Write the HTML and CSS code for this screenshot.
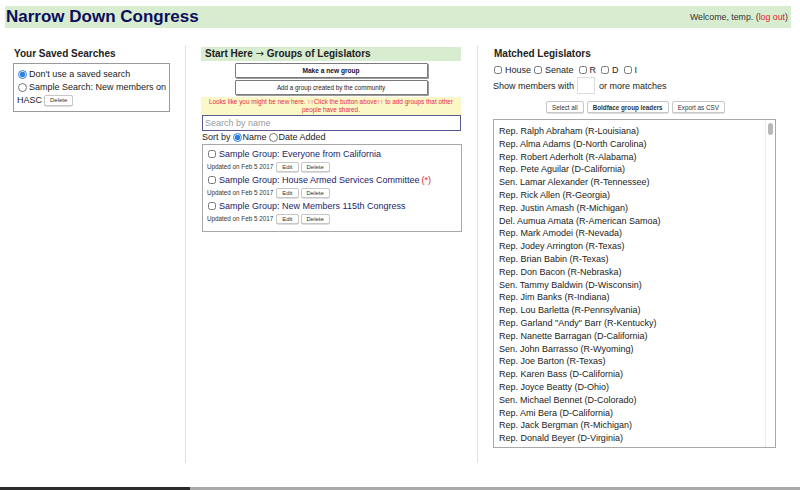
FILE: index.html
```html
<!DOCTYPE html>
<html>
<head>
<meta charset="utf-8">
<link rel="stylesheet" href="styles.css">
</head>
<body>
<div class="page">
  <header class="topbar">
    <h1 class="title">Narrow Down Congress</h1>
    <div class="welcome">Welcome, temp. (<a class="logout" href="#">log out</a>)</div>
  </header>
  <main class="cols">
    <section class="col col1">
      <h2 class="heading">Your Saved Searches</h2>
      <div class="saved">
        <label class="line"><input type="radio" name="s" class="radio" checked> Don't use a saved search</label>
        <label class="line"><input type="radio" name="s" class="radio"> Sample Search: New members on</label>
        <div class="line">HASC <button class="sbtn">Delete</button></div>
      </div>
    </section>
    <section class="col col2">
      <h2 class="heading green">Start Here <span class="arrow">→</span> Groups of Legislators</h2>
      <button class="bigbtn bold">Make a new group</button>
      <button class="bigbtn">Add a group created by the community</button>
      <div class="notice">Looks like you might be new here. ↑↑Click the button above↑↑ to add groups that other people have shared.</div>
      <input class="search" type="text" placeholder="Search by name">
      <div class="sort">Sort by <input type="radio" name="o" class="radio" checked>Name<input type="radio" name="o" class="radio">Date Added</div>
      <div class="groups">
        <div class="group">
          <label class="gname"><input type="checkbox" class="check"> Sample Group: Everyone from California</label>
          <div class="meta">Updated on Feb 5 2017 <button class="sbtn">Edit</button> <button class="sbtn">Delete</button></div>
        </div>
        <div class="group">
          <label class="gname"><input type="checkbox" class="check"> Sample Group: House Armed Services Committee <span class="star">(*)</span></label>
          <div class="meta">Updated on Feb 5 2017 <button class="sbtn">Edit</button> <button class="sbtn">Delete</button></div>
        </div>
        <div class="group">
          <label class="gname"><input type="checkbox" class="check"> Sample Group: New Members 115th Congress</label>
          <div class="meta">Updated on Feb 5 2017 <button class="sbtn">Edit</button> <button class="sbtn">Delete</button></div>
        </div>
      </div>
    </section>
    <section class="col col3">
      <h2 class="heading">Matched Legislators</h2>
      <div class="filters">
        <label><input type="checkbox" class="check">House</label>
        <label><input type="checkbox" class="check">Senate</label>
        <label class="gap"><input type="checkbox" class="check">R</label>
        <label class="gap"><input type="checkbox" class="check">D</label>
        <label class="gap"><input type="checkbox" class="check">I</label>
      </div>
      <div class="showrow">Show members with <input class="num" type="text"> or more matches</div>
      <div class="actions">
        <button class="sbtn">Select all</button>
        <button class="sbtn bold">Boldface group leaders</button>
        <button class="sbtn">Export as CSV</button>
      </div>
      <div class="listbox">
        <ul class="list">
          <li>Rep. Ralph Abraham (R-Louisiana)</li>
          <li>Rep. Alma Adams (D-North Carolina)</li>
          <li>Rep. Robert Aderholt (R-Alabama)</li>
          <li>Rep. Pete Aguilar (D-California)</li>
          <li>Sen. Lamar Alexander (R-Tennessee)</li>
          <li>Rep. Rick Allen (R-Georgia)</li>
          <li>Rep. Justin Amash (R-Michigan)</li>
          <li>Del. Aumua Amata (R-American Samoa)</li>
          <li>Rep. Mark Amodei (R-Nevada)</li>
          <li>Rep. Jodey Arrington (R-Texas)</li>
          <li>Rep. Brian Babin (R-Texas)</li>
          <li>Rep. Don Bacon (R-Nebraska)</li>
          <li>Sen. Tammy Baldwin (D-Wisconsin)</li>
          <li>Rep. Jim Banks (R-Indiana)</li>
          <li>Rep. Lou Barletta (R-Pennsylvania)</li>
          <li>Rep. Garland "Andy" Barr (R-Kentucky)</li>
          <li>Rep. Nanette Barragan (D-California)</li>
          <li>Sen. John Barrasso (R-Wyoming)</li>
          <li>Rep. Joe Barton (R-Texas)</li>
          <li>Rep. Karen Bass (D-California)</li>
          <li>Rep. Joyce Beatty (D-Ohio)</li>
          <li>Sen. Michael Bennet (D-Colorado)</li>
          <li>Rep. Ami Bera (D-California)</li>
          <li>Rep. Jack Bergman (R-Michigan)</li>
          <li>Rep. Donald Beyer (D-Virginia)</li>
        </ul>
        <div class="scrolltrack"><div class="thumb"></div></div>
      </div>
    </section>
  </main>
  <div class="spacer"></div>
  <div class="statusbar"><div class="dark"></div><div class="light"></div></div>
</div>
</body>
</html>
```
FILE: styles.css
```css
* { box-sizing: border-box; }
html, body { margin: 0; padding: 0; background: #fff; }
body { font-family: "Liberation Sans", Arial, sans-serif; color: #222; font-size: 9px; }
.page { height: 490px; display: flex; flex-direction: column; overflow: hidden; }

.topbar {
  margin: 6px 9px 0 5px; height: 22px; background: #d8ecd0;
  display: flex; align-items: center; justify-content: space-between; padding: 0 3px 0 1px;
}
.title { margin: 0; font-size: 17px; font-weight: bold; color: #0c0c5c; line-height: 22px; }
.welcome { font-size: 8.8px; color: #333; }
.logout { color: #e0202a; text-decoration: none; }

.cols { display: flex; margin: 17px 0 0 5px; height: 418px; }
.col { height: 100%; }
.col1 { width: 181px; padding-left: 8px; border-right: 1px solid #e2e2e2; }
.col2 { width: 292px; padding-left: 15px; padding-right: 16px; border-right: 1px solid #e2e2e2; }
.col3 { padding-left: 15px; width: 313px; }

.heading { margin: 2px 0 2px; font-size: 10px; font-weight: bold; line-height: 14px; height: 14px; color: #222; }
.col1 .heading, .col3 .heading { padding-left: 1px; }
.heading.green { background: #d8ecd0; padding-left: 4px; }
.arrow { font-family: "DejaVu Sans", sans-serif; font-weight: normal; font-size: 10px; }

.saved { width: 157px; border: 1px solid #9a9a9a; padding: 4px 3px 4px 3px; font-size: 9px; line-height: 13px; }
.line { display: flex; align-items: center; white-space: nowrap; }
.radio { margin: 0 2px 0 1px; width: 9px; height: 9px; accent-color: #2d7ee0; }
.check { margin: 0 3px 0 1px; width: 8px; height: 8px; }

button { font-family: "Liberation Sans", Arial, sans-serif; cursor: default; }
.sbtn {
  font-size: 6px; padding: 0 5px; height: 11px; line-height: 9px;
  background: #fff; border: 1px solid #c8c8c8; border-radius: 2px; color: #333;
  margin-left: 2px; box-shadow: 0 0.5px 0 #bbb;
}
.bold { font-weight: bold; }

.bigbtn {
  display: block; width: 193px; height: 15px; margin: 0 auto 2px; padding: 0;
  background: #fff; border: 1px solid #7a7a7a; border-radius: 1px;
  box-shadow: 1px 1px 0 #9a9a9a; font-size: 6.3px; color: #222;
}
.bigbtn.bold { font-size: 6.6px; color: #111133; }

.notice {
  background: #fbf8c8; color: #e8294a; font-size: 6.4px; line-height: 8px;
  text-align: center; padding: 1px 6px; height: 18px; margin-top: 1px;
}
.search {
  display: block; width: 259px; height: 16px; margin: 0 0 0 1px;
  border: 1.5px solid #5a5a92; padding: 0 2px; font-size: 9px;
  font-family: "Liberation Sans", Arial, sans-serif;
}
.search::placeholder { color: #9a9a9a; }
.sort { display: flex; align-items: center; height: 12px; margin: 0 0 1px 1px; font-size: 9px; }
.sort .radio { margin: 0 1px 0 2px; }

.groups { width: 260px; margin-left: 1px; border: 1px solid #a8a8a8; padding: 2px 4px 6px 4px; height: 88px; }
.group { height: 26px; }
.gname { display: flex; align-items: center; height: 13px; color: #1c1c6a; font-size: 9px; white-space: nowrap; }
.star { color: #e02030; margin-left: 2px; }
.meta { display: flex; align-items: center; height: 13px; font-size: 6.3px; color: #333; }
.meta .sbtn { height: 10px; padding: 0 5px; margin-left: 2px; }
.meta .sbtn:first-child { margin-left: 3px; }

.filters { display: flex; align-items: center; height: 14px; font-size: 9px; }
.filters label { display: flex; align-items: center; margin-right: 2px; }
.filters .gap { margin-left: 2px; }
.showrow { display: flex; align-items: center; height: 17px; font-size: 9px; }
.num { width: 18px; height: 17px; margin: 0 4px 0 3px; border: 1px solid #ddd; padding: 0; }
.actions { width: 283px; display: flex; justify-content: center; margin: 7px 0 6px; height: 12px; gap: 1px; }
.actions .sbtn { height: 12px; font-size: 6.3px; padding: 0 5px; margin-left: 2px; }

.listbox { width: 283px; height: 329px; border: 1px solid #a8a8a8; display: flex; }
.list { list-style: none; margin: 0; padding: 5px 0 0 5px; flex: 1; font-size: 9px; line-height: 12.8px; color: #222; overflow: hidden; }
.scrolltrack { width: 10px; border-left: 1px solid #ececec; padding: 3px 2px 0 2px; }
.thumb { width: 5px; height: 12px; background: #b8b8b8; border-radius: 3px; }

.spacer { flex: 1; }
.statusbar { height: 3px; display: flex; margin-bottom: 0; }
.statusbar .dark { width: 190px; background: #2a2a2a; }
.statusbar .light { flex: 1; background: #a8a8a8; }
```
